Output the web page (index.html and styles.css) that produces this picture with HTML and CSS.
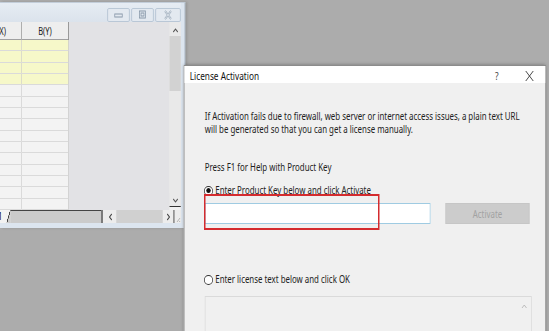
FILE: index.html
```html
<!DOCTYPE html>
<html lang="en">
<head>
    <meta charset="UTF-8">
    <title>License Activation</title>
    <link rel="stylesheet" href="styles.css">
</head>
<body>
    <div class="desktop">
        <!-- worksheet window behind the dialog -->
        <div class="window sheet">
            <div class="sheet-title">
                <span class="cap-btn">
                    <svg width="14" height="8" viewBox="0 0 14 8"><rect x="2" y="3" width="10" height="3" fill="none" stroke="#8797a8"/></svg>
                </span>
                <span class="cap-btn">
                    <svg width="14" height="10" viewBox="0 0 14 10"><rect x="3" y="1" width="8" height="7" fill="none" stroke="#8797a8"/><rect x="5" y="3" width="4" height="3" fill="none" stroke="#8797a8"/></svg>
                </span>
                <span class="cap-btn close">
                    <svg width="14" height="10" viewBox="0 0 14 10"><path d="M3 1 L11 9 M11 1 L3 9" stroke="#9aa9b8" stroke-width="2.4" fill="none"/><path d="M3 1 L11 9 M11 1 L3 9" stroke="#eef2f6" stroke-width="0.8" fill="none"/></svg>
                </span>
            </div>
            <div class="sheet-client">
                <div class="sheet-main">
                    <div class="grid">
                        <div class="cell head col-a"><span>A(X)</span></div>
                        <div class="cell head">B(Y)</div>
                        <div class="cell yellow col-a"></div><div class="cell yellow"></div>
                        <div class="cell yellow col-a"></div><div class="cell yellow"></div>
                        <div class="cell yellow col-a"></div><div class="cell yellow"></div>
                        <div class="cell yellow col-a"></div><div class="cell yellow"></div>
                        <div class="cell col-a"></div><div class="cell"></div>
                        <div class="cell col-a"></div><div class="cell"></div>
                        <div class="cell col-a"></div><div class="cell"></div>
                        <div class="cell col-a"></div><div class="cell"></div>
                        <div class="cell col-a"></div><div class="cell"></div>
                        <div class="cell col-a"></div><div class="cell"></div>
                        <div class="cell col-a"></div><div class="cell"></div>
                        <div class="cell col-a"></div><div class="cell"></div>
                        <div class="cell col-a"></div><div class="cell"></div>
                        <div class="cell col-a"></div><div class="cell"></div>
                        <div class="cell col-a"></div><div class="cell"></div>
                    </div>
                    <div class="empty-area"></div>
                    <div class="vscroll">
                        <svg class="arrow" width="10" height="8" viewBox="0 0 10 8"><path d="M2 6 L5 3 L8 6" stroke="#555" stroke-width="1.2" fill="none"/></svg>
                        <div class="track"><div class="thumb"></div></div>
                        <svg class="arrow" width="10" height="8" viewBox="0 0 10 8"><path d="M2 2 L5 5 L8 2" stroke="#555" stroke-width="1.2" fill="none"/></svg>
                        <div class="vscroll-end"></div>
                    </div>
                </div>
                <div class="sheet-bottom">
                    <div class="tab-num">1</div>
                    <div class="tab-slant"></div>
                    <div class="tab-area"></div>
                    <div class="hscroll">
                        <svg width="10" height="10" viewBox="0 0 10 10"><path d="M6 2 L3 5 L6 8" stroke="#444" stroke-width="1.2" fill="none"/></svg>
                        <div class="htrack"></div>
                        <svg width="10" height="10" viewBox="0 0 10 10"><path d="M4 2 L7 5 L4 8" stroke="#444" stroke-width="1.2" fill="none"/></svg>
                    </div>
                    <div class="grip">
                        <svg width="8" height="8" viewBox="0 0 8 8"><path d="M7 3 L3 7 M7 6 L6 7" stroke="#aaa" stroke-width="1" fill="none"/></svg>
                    </div>
                </div>
            </div>
        </div>

        <!-- license dialog -->
        <div class="window dialog">
            <div class="dialog-title">
                <span class="dialog-caption">License Activation</span>
                <span class="help">?</span>
                <svg class="close-x" width="14" height="12" viewBox="0 0 14 12"><path d="M2 1 L12 11 M12 1 L2 11" stroke="#333" stroke-width="1" fill="none"/></svg>
            </div>
            <div class="dialog-body">
                <p class="note">If Activation fails due to firewall, web server or internet access issues, a plain text URL<br>will be generated so that you can get a license manually.</p>
                <p class="help-line">Press F1 for Help with Product Key</p>
                <label class="radio-row">
                    <span class="radio checked"></span>
                    Enter Product Key below and click Activate
                </label>
                <div class="key-row">
                    <div class="key-input"></div>
                    <div class="activate-btn">Activate</div>
                    <div class="highlight"></div>
                </div>
                <label class="radio-row second">
                    <span class="radio"></span>
                    Enter license text below and click OK
                </label>
                <div class="license-box">
                    <svg class="box-arrow" width="10" height="8" viewBox="0 0 10 8"><path d="M2 6 L5 3 L8 6" stroke="#b5b5b5" stroke-width="1" fill="none"/></svg>
                </div>
            </div>
        </div>
    </div>
</body>
</html>
```

FILE: styles.css
```css
body {
    margin: 0;
    background-color: #acacac;
    overflow: hidden;
    font-family: "Noto Sans", "Open Sans", sans-serif;
}

/* the screenshot is squeezed to 3/4 of its width, so lay out wide and squeeze */
.desktop {
    position: relative;
    width: 732px;
    height: 331px;
    background-color: #acacac;
    transform: scaleX(0.75);
    transform-origin: 0 0;
    overflow: hidden;
}

.window {
    position: absolute;
    box-sizing: border-box;
}

/* ---------- worksheet window ---------- */

.sheet {
    left: 0;
    top: 2px;
    width: 247px;
    height: 226px;
    background: #dce5ef;
    border-top: 1px solid #c3ceda;
    border-right: 1px solid #a9b6c4;
    padding-right: 5px;
    display: flex;
    flex-direction: column;
    box-shadow: 2px 0 3px rgba(0, 0, 0, 0.15);
}

.sheet-title {
    height: 19px;
    display: flex;
    justify-content: flex-end;
    align-items: flex-start;
    padding-top: 5px;
    box-sizing: border-box;
    background: linear-gradient(#e6ecf3, #dbe3ec);
}

.cap-btn {
    width: 30px;
    height: 14px;
    margin-left: 2px;
    box-sizing: border-box;
    border: 1px solid #b3c2d2;
    border-radius: 2px;
    background: #e3e9f0;
    display: flex;
    align-items: center;
    justify-content: center;
}

.cap-btn.close {
    width: 34px;
}

.sheet-client {
    flex: 1;
    display: flex;
    flex-direction: column;
    background: #e2e2e5;
    margin-bottom: 5px;
}

.sheet-main {
    flex: 1;
    display: flex;
    min-height: 0;
}

.grid {
    display: grid;
    grid-template-columns: 29px 63px;
    grid-template-rows: 18px;
    grid-auto-rows: 11.33px;
    font-size: 10px;
    color: #222;
}

.cell {
    box-sizing: border-box;
    background: #f3f3f3;
    border-right: 1px solid #c9c9c9;
    border-bottom: 1px solid #dadada;
}

.cell.yellow {
    background: #f6f8c9;
}

.cell.head {
    background: #eeeeee;
    border-right: 1px solid #7d7d7d;
    border-bottom: 1px solid #a0a0a0;
    display: flex;
    align-items: center;
    justify-content: center;
    overflow: hidden;
}

.cell.head.col-a {
    justify-content: flex-end;
    padding-right: 20px;
}

.empty-area {
    flex: 1;
}

.vscroll {
    width: 15px;
    background: #e9e9e9;
    display: flex;
    flex-direction: column;
    align-items: center;
}

.vscroll .arrow {
    margin: 4px 0 1px;
}

.track {
    flex: 1;
    width: 100%;
    background: #e9e9e9;
}

.thumb {
    margin-top: 1px;
    height: 55px;
    width: 100%;
    background: #d2d2d2;
}

.vscroll-end {
    height: 3px;
    width: 100%;
    border-top: 1px solid #333;
    background: #f0f0f0;
}

.sheet-bottom {
    height: 13px;
    display: flex;
    background: #e8e8e8;
    font-size: 10px;
}

.tab-num {
    width: 9px;
    line-height: 13px;
    text-indent: -2px;
    overflow: hidden;
    background: #f2f2f2;
}

.tab-slant {
    width: 5px;
    background: linear-gradient(to bottom right, #f2f2f2 42%, #444 46%, #444 54%, #cbcbcb 58%);
}

.tab-area {
    width: 121px;
    border-top: 1px solid #444;
    background: #cbcbcb;
}

.hscroll {
    width: 86px;
    display: flex;
    align-items: center;
    border-left: 2px solid #555;
    border-right: 2px solid #777;
    padding: 0 2px 0 6px;
    background: #ececec;
}

.htrack {
    flex: 1;
    height: 100%;
    background: #d0d0d0;
    margin: 0 2px;
}

.grip {
    flex: 1;
    display: flex;
    align-items: flex-end;
    justify-content: flex-end;
    background: #ececec;
}

/* ---------- license dialog ---------- */

.dialog {
    left: 245px;
    top: 65px;
    width: 483px;
    height: 280px;
    background: #f0f0f0;
    border: 1px solid #8c8c8c;
    box-shadow: 0 0 4px rgba(0, 0, 0, 0.35);
    display: flex;
    flex-direction: column;
}

.dialog-title {
    height: 22px;
    padding-top: 2px;
    box-sizing: border-box;
    background: #ffffff;
    display: flex;
    align-items: center;
    padding-left: 7px;
    font-size: 11px;
    color: #111;
}

.dialog-caption {
    flex: 1;
}

.help {
    width: 12px;
    color: #444;
    margin-right: 27px;
}

.close-x {
    margin-right: 14px;
}

.dialog-body {
    padding: 27px 20px 0 27px;
    font-size: 10.5px;
    color: #222;
}

.note {
    margin: 0;
    line-height: 13px;
    white-space: nowrap;
}

.help-line {
    margin: 25px 0 0;
    line-height: 13px;
}

.radio-row {
    display: flex;
    align-items: center;
    margin-top: 10px;
    line-height: 13px;
}

.radio-row.second {
    margin-top: 49px;
}

.radio {
    width: 12px;
    height: 10px;
    margin: 0 3px 0 -1px;
    box-sizing: border-box;
    border: 1px solid #333;
    border-radius: 50%;
    background: #fff;
    display: flex;
    align-items: center;
    justify-content: center;
}

.radio.checked::after {
    content: "";
    width: 6px;
    height: 5px;
    border-radius: 50%;
    background: #111;
}

.key-row {
    position: relative;
    display: flex;
    gap: 20px;
    margin-top: 6px;
    height: 21px;
}

.key-input {
    width: 301px;
    box-sizing: border-box;
    border: 1px solid #9fcbe2;
    background: #fff;
}

.activate-btn {
    width: 112px;
    box-sizing: border-box;
    border: 1px solid #c6c6c6;
    background: #cccccc;
    color: #a2a2a2;
    display: flex;
    align-items: center;
    justify-content: center;
}

.highlight {
    position: absolute;
    left: -1px;
    top: -9px;
    width: 234px;
    height: 36px;
    box-sizing: border-box;
    border: 2px solid #d42b2e;
}

.license-box {
    margin-top: 10px;
    width: 436px;
    height: 60px;
    box-sizing: border-box;
    border: 1px solid #dadada;
    display: flex;
    justify-content: flex-end;
    padding: 5px 4px 0 0;
}
```
